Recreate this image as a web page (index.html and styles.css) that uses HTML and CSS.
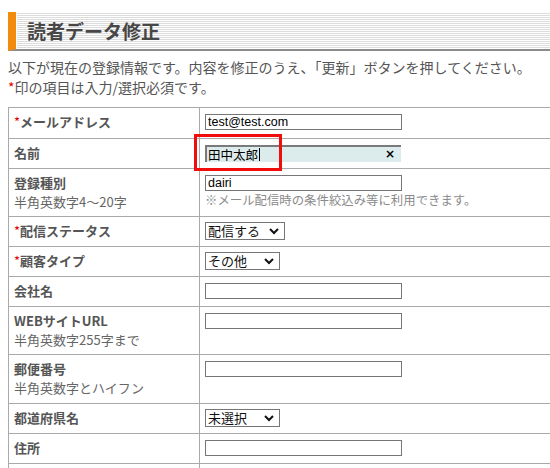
FILE: index.html
```html
<!DOCTYPE html>
<html lang="ja">
<head>
<meta charset="utf-8">
<title>読者データ修正</title>
<link rel="stylesheet" href="styles.css">
</head>
<body>
<div class="page">
  <h2 class="title">読者データ修正</h2>
  <p class="lead">以下が現在の登録情報です。内容を修正のうえ、「更新」ボタンを押してください。<br><span class="req">*</span>印の項目は入力/選択必須です。</p>
  <table class="form">
    <tr class="r31">
      <th><span class="req">*</span>メールアドレス</th>
      <td><input class="txt" type="text" value="test@test.com"></td>
    </tr>
    <tr class="r30">
      <th>名前</th>
      <td class="focus-cell">
        <div class="search"><span class="search-val">田中太郎</span><span class="caret"></span><span class="clear">×</span></div>
        <div class="highlight"></div>
      </td>
    </tr>
    <tr class="r48">
      <th>登録種別<span class="sub">半角英数字4〜20字</span></th>
      <td><input class="txt" type="text" value="dairi"><span class="note">※メール配信時の条件絞込み等に利用できます。</span></td>
    </tr>
    <tr class="r30">
      <th><span class="req">*</span>配信ステータス</th>
      <td><div class="selbox sel-w80"><select class="sel"><option>配信する</option></select><svg class="chev" width="10" height="7" viewBox="0 0 10 7"><polyline points="1,1 5,5 9,1" fill="none" stroke="#111" stroke-width="2"/></svg></div></td>
    </tr>
    <tr class="r30">
      <th><span class="req">*</span>顧客タイプ</th>
      <td><div class="selbox sel-w75"><select class="sel"><option>その他</option></select><svg class="chev" width="10" height="7" viewBox="0 0 10 7"><polyline points="1,1 5,5 9,1" fill="none" stroke="#111" stroke-width="2"/></svg></div></td>
    </tr>
    <tr class="r30">
      <th>会社名</th>
      <td><input class="txt" type="text"></td>
    </tr>
    <tr class="r48">
      <th>WEBサイトURL<span class="sub">半角英数字255字まで</span></th>
      <td><input class="txt" type="text"></td>
    </tr>
    <tr class="r49">
      <th>郵便番号<span class="sub">半角英数字とハイフン</span></th>
      <td><input class="txt" type="text"></td>
    </tr>
    <tr class="r30">
      <th>都道府県名</th>
      <td><div class="selbox sel-w75"><select class="sel"><option>未選択</option></select><svg class="chev" width="10" height="7" viewBox="0 0 10 7"><polyline points="1,1 5,5 9,1" fill="none" stroke="#111" stroke-width="2"/></svg></div></td>
    </tr>
    <tr class="r30">
      <th>住所</th>
      <td><input class="txt" type="text"></td>
    </tr>
    <tr class="r30">
      <th>&nbsp;</th>
      <td><input class="txt" type="text"></td>
    </tr>
  </table>
</div>
</body>
</html>
```
FILE: styles.css
```css
html, body {
  margin: 0;
  padding: 0;
  background: #fff;
  overflow: hidden;
}
body {
  font-family: "Noto Sans CJK JP", "Noto Sans", sans-serif;
  color: #555;
}
.page {
  width: 620px;
  padding: 12px 0 0 8px;
}
.title {
  margin: 0;
  height: 37px;
  border-left: 8px solid #f28c0f;
  border-bottom: 2px solid #8c8c8c;
  background:
    linear-gradient(to right, #fff 1px, transparent 1px),
    repeating-linear-gradient(to bottom, #fff 0, #fff 1px, #dcdcdc 1px, #dcdcdc 2px);
  padding-left: 11px;
  font-size: 19px;
  font-weight: bold;
  line-height: 38px;
  color: #474747;
}
.lead {
  margin: 6px 0 0 0;
  font-size: 14px;
  line-height: 20px;
  color: #555;
}
.req {
  color: #e60000;
  font-weight: normal;
}
.form {
  margin-top: 10px;
  border-collapse: collapse;
  width: 600px;
}
.form th, .form td {
  border: 1px solid #aaa;
  padding: 4px 5px 0 5px;
  vertical-align: top;
  text-align: left;
  font-size: 13px;
  line-height: 19px;
}
.form td {
  padding-top: 5px;
}
.r31 { height: 31px; }
.r30 { height: 30px; }
.r48 { height: 48px; }
.r49 { height: 49px; }
.form th {
  width: 180px;
  font-weight: bold;
  color: #555;
}
.sub {
  display: block;
  font-weight: normal;
  color: #666;
}
.txt {
  display: block;
  box-sizing: border-box;
  width: 197px;
  height: 16px;
  margin: 1px 0 0 0;
  padding: 0 2px;
  border: 1px solid #767676;
  border-radius: 0;
  font-family: "Liberation Sans", "Noto Sans CJK JP", sans-serif;
  font-size: 12.5px;
  color: #000;
  background: #fff;
}
.note {
  display: block;
  font-size: 12.4px;
  line-height: 18px;
  color: #8a8a8a;
}
.focus-cell {
  position: relative;
}
.search {
  box-sizing: border-box;
  width: 196px;
  height: 17px;
  margin-top: 1px;
  display: flex;
  align-items: center;
  background: #dcebeb;
  border-top: 2px solid #7a7a7a;
  border-left: 2px solid #7a7a7a;
  padding-left: 1px;
}
.search-val {
  font-size: 12.5px;
  line-height: 15px;
  color: #000;
}
.caret {
  width: 1px;
  height: 13px;
  background: #000;
  margin-left: 1px;
}
.clear {
  margin-left: auto;
  margin-right: 6px;
  font-family: "DejaVu Sans", sans-serif;
  font-size: 12px;
  font-weight: bold;
  line-height: 15px;
  color: #000;
}
.highlight {
  position: absolute;
  left: -6px;
  top: -5px;
  width: 82px;
  height: 31px;
  border: 3px solid #f20d0d;
}
.selbox {
  position: relative;
  height: 18px;
}
.sel-w80 { width: 80px; }
.sel-w75 { width: 75px; }
.sel {
  display: block;
  box-sizing: border-box;
  -webkit-appearance: none;
  appearance: none;
  width: 100%;
  height: 18px;
  margin: 0;
  padding: 0 0 0 2px;
  border: 1px solid #767676;
  border-radius: 0;
  background: #fff;
  font-family: "Noto Sans CJK JP", sans-serif;
  font-size: 13px;
  line-height: 16px;
  color: #111;
}
.chev {
  position: absolute;
  right: 6px;
  top: 6px;
  pointer-events: none;
}
```
